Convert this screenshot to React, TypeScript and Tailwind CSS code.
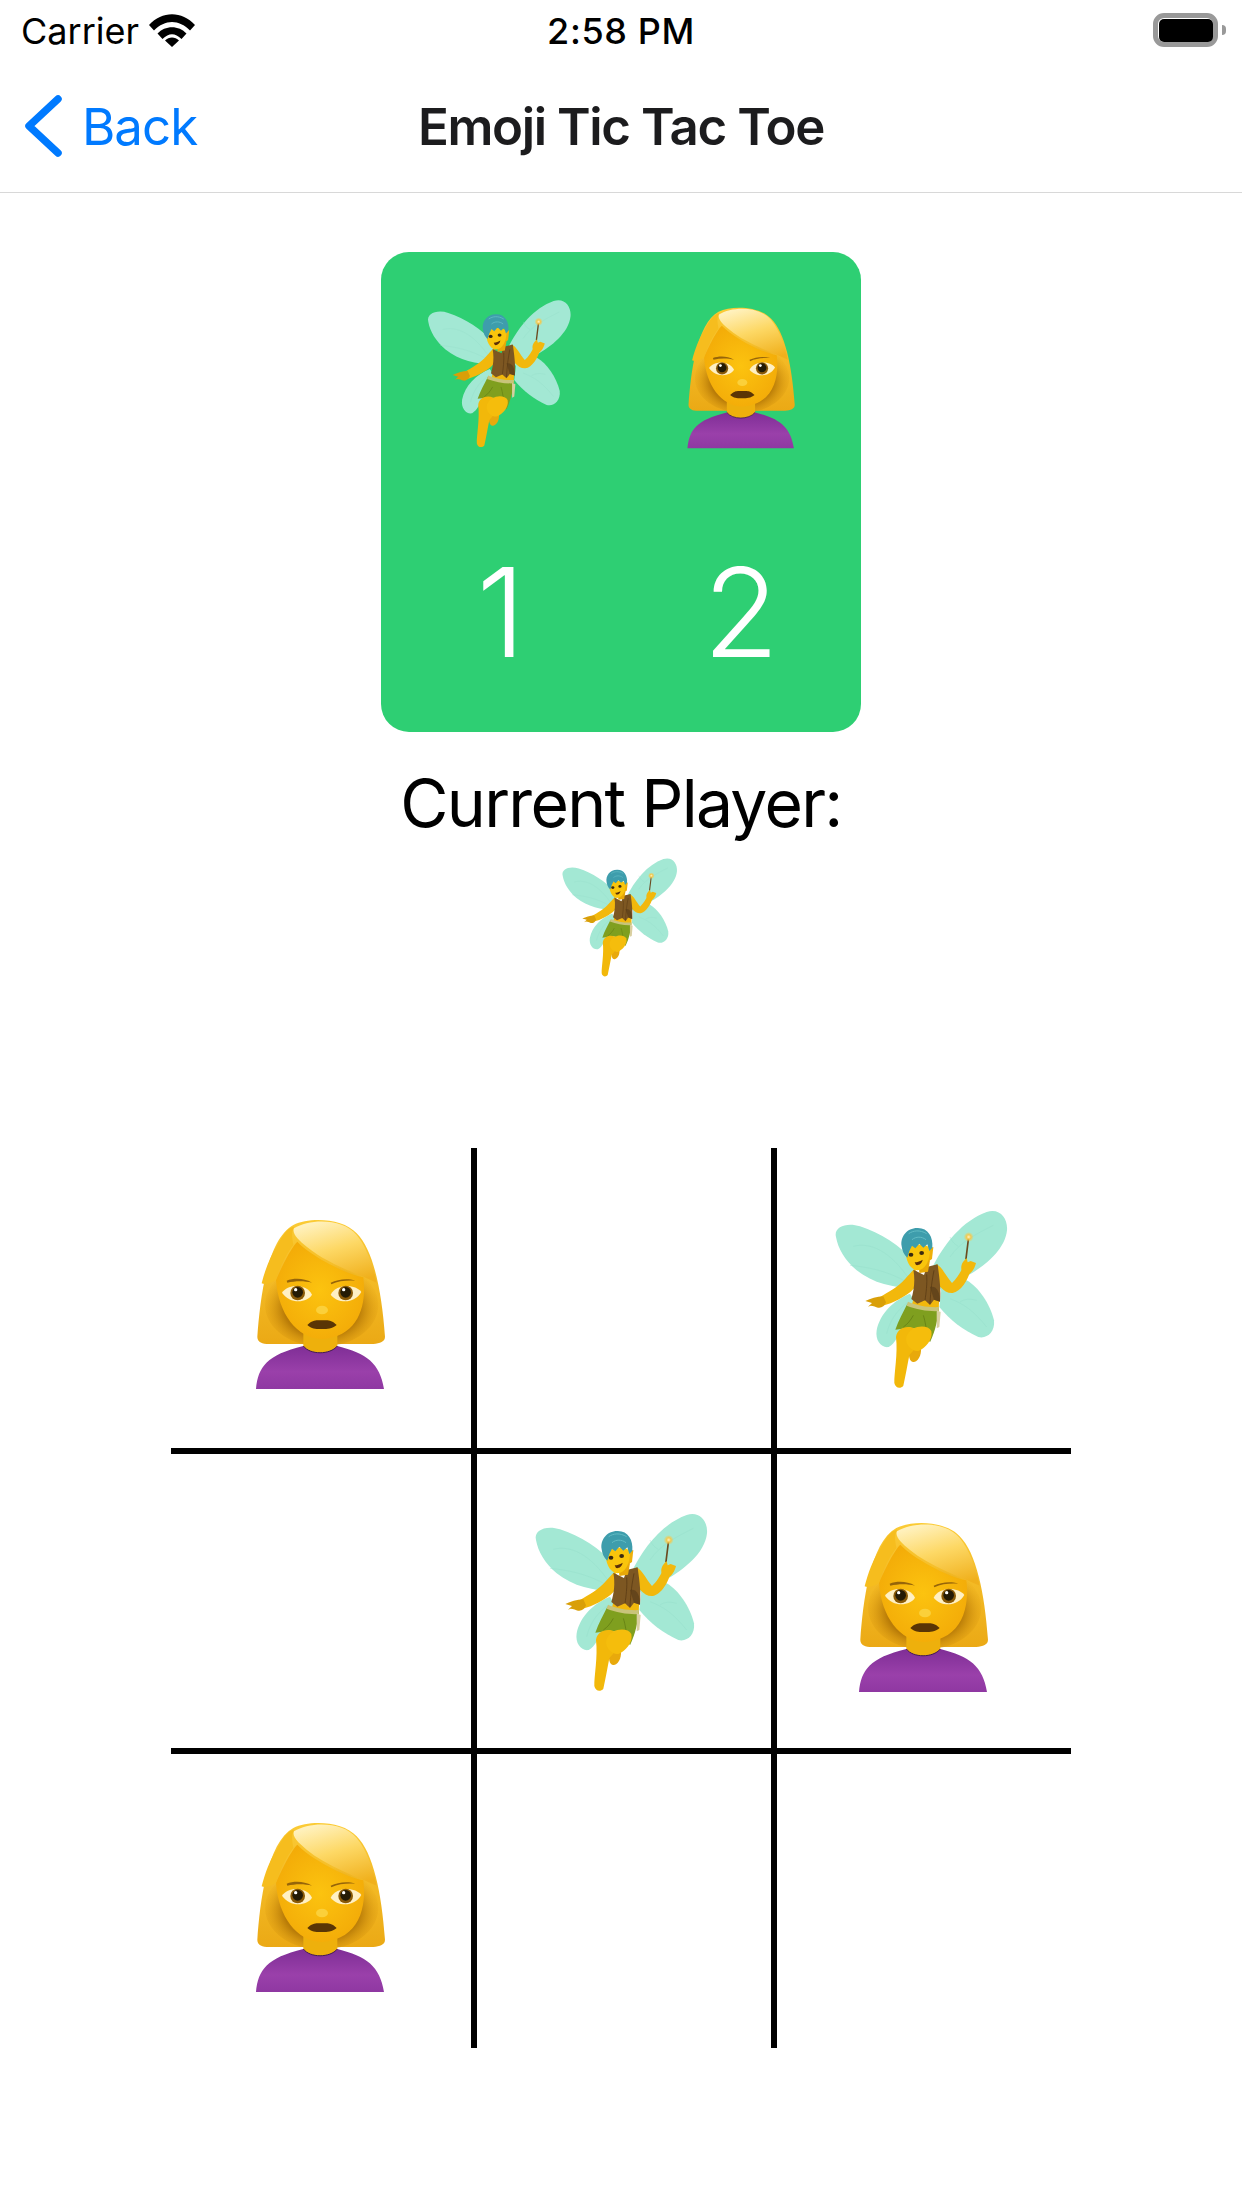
// App.tsx
type Mark = 'fairy' | 'woman' | null

const BOARD: Mark[] = ['woman', null, 'fairy', null, 'fairy', 'woman', 'woman', null, null]

const Defs = () => (
  <defs>
    <linearGradient id="hairGrad" x1="0" y1="0" x2="0" y2="1">
      <stop offset="0" stopColor="#fbcb35" />
      <stop offset="1" stopColor="#eba915" />
    </linearGradient>
    <linearGradient id="hairTop" x1="0.3" y1="0" x2="0.7" y2="1">
      <stop offset="0" stopColor="#fff1bd" />
      <stop offset="0.45" stopColor="#fdd865" />
      <stop offset="1" stopColor="#f0b01c" />
    </linearGradient>
    <radialGradient id="hairShade" cx="0.5" cy="0.55" r="0.55">
      <stop offset="0.6" stopColor="#b97c08" />
      <stop offset="1" stopColor="#e9a714" stopOpacity="0" />
    </radialGradient>
    <radialGradient id="faceGrad" cx="0.5" cy="0.5" r="0.62">
      <stop offset="0" stopColor="#fcc30f" />
      <stop offset="1" stopColor="#f2a807" />
    </radialGradient>
    <linearGradient id="shirtGrad" x1="0" y1="0" x2="0" y2="1">
      <stop offset="0" stopColor="#7f2e96" />
      <stop offset="0.6" stopColor="#9a40aa" />
      <stop offset="1" stopColor="#8f38a2" />
    </linearGradient>
    <radialGradient id="glow">
      <stop offset="0" stopColor="#fff7c8" />
      <stop offset="0.45" stopColor="#fbc744" stopOpacity="0.9" />
      <stop offset="1" stopColor="#fbc744" stopOpacity="0" />
    </radialGradient>
  </defs>
)

const FairyIcon = ({ className }: { className: string }) => (
  <svg viewBox="12 3 660 660" className={className}>
    <Defs />
    {/* wings */}
    <g fill="#a3e8d4">
      <path d="M78 150C70 120 110 105 150 118C210 138 272 175 312 225L316 305C250 302 190 290 140 250C105 220 84 185 78 150Z" />
      <path d="M362 252C400 170 460 100 530 75C570 62 594 95 591 130C585 190 520 240 470 268L395 312Z" />
      <path d="M300 320C250 340 210 380 200 430C195 462 215 484 236 480C256 470 266 440 282 420L312 340Z" />
      <path d="M395 300L470 280C505 300 540 350 552 400C556 435 530 457 505 450C460 430 420 400 388 360Z" />
    </g>
    <g fill="none" stroke="#93dcc8" strokeWidth="2" opacity="0.55">
      <path d="M130 178C180 165 240 190 300 280" />
      <path d="M120 235C170 240 230 250 290 285" />
      <path d="M420 210C450 165 500 140 550 115M445 178C430 170 425 160 420 150" />
      <path d="M420 335C460 350 490 370 530 420M450 345C465 335 480 335 500 340" />
      <path d="M230 440C240 400 260 370 295 345" />
    </g>
    {/* back foot */}
    <path d="M298 480L332 476C336 495 330 520 312 525C298 527 294 505 298 480Z" fill="#e8a90c" />
    {/* right arm + hand + wand */}
    <path d="M476 150L468 215" stroke="#6b4a20" strokeWidth="5" strokeLinecap="round" />
    <circle cx="476" cy="150" r="15" fill="url(#glow)" />
    <path d="M378 232C396 238 408 268 426 288C440 276 452 255 460 238L482 246C476 278 452 314 428 318C400 320 382 288 368 272Z" fill="#f2b80c" />
    <path d="M454 246C452 232 462 220 470 214L473 226L482 222L498 228C495 242 484 262 470 264C460 264 456 256 454 246Z" fill="#f2b80c" />
    {/* left arm + hand */}
    <path d="M314 246C300 256 280 288 250 306C235 316 222 323 210 330L218 356C250 348 282 330 302 314C320 300 326 280 326 262Z" fill="#f2b80c" />
    <path d="M166 342C182 335 200 328 220 328L228 346C224 358 214 364 204 362C198 360 190 356 182 356L174 359L186 348Z" fill="#d99f08" />
    {/* torso */}
    <path d="M314 320L388 322L386 372L302 368Z" fill="#f2b80c" />
    <path d="M310 248L342 264L350 240L383 232C386 260 394 300 390 344L372 338L360 354L345 340L322 350L304 336C312 310 316 280 310 248Z" fill="#7d5722" />
    <path d="M350 262C352 290 348 320 345 340M372 250C366 280 362 310 360 350" stroke="#5c3c14" strokeWidth="2.500" fill="none" />
    <path d="M360 300C380 295 390 315 390 344L372 338Z" fill="#5a3d18" opacity="0.7" />
    {/* shorts */}
    <path d="M292 350C320 360 360 366 386 364C384 395 377 430 360 466L338 428L300 422L256 428C266 398 280 375 292 350Z" fill="#7f9f1f" />
    <path d="M310 385C302 400 292 412 280 420M340 385C345 400 346 412 352 440" stroke="#647f14" strokeWidth="2.500" fill="none" />
    <path d="M294 344C320 356 360 362 387 360L386 372C360 374 320 368 290 356Z" fill="#c8c47a" />
    <path d="M380 370L392 375L388 420L380 424Z" fill="#d9cfa0" />
    {/* legs */}
    <path d="M258 450C262 415 310 410 328 438C334 470 310 490 298 505C292 535 286 570 280 596C272 606 256 604 253 588C252 560 264 500 258 450Z" fill="#f2b80a" />
    <path d="M290 448C302 415 352 410 364 432C370 458 345 484 325 492C305 494 282 472 290 448Z" fill="#f5bd0c" />
    {/* head */}
    <path d="M352 186L370 180L366 216L348 228Z" fill="#eeb008" />
    <path d="M326 228L360 220L354 254L328 258Z" fill="#e8a808" />
    <path d="M286 186C286 172 354 164 360 186C360 222 346 248 322 250C298 248 286 216 286 186Z" fill="#f9c50c" />
    <path d="M275 178C270 150 290 123 322 123C354 122 370 150 367 182L358 192L352 172L340 182L328 170L316 184L306 176L298 192L292 212C282 204 276 190 275 178Z" fill="#3e9dac" />
    <path d="M296 140C310 130 330 128 350 140M306 158C318 148 335 148 348 158" stroke="#62bcc4" strokeWidth="3" fill="none" />
    <ellipse cx="303" cy="203" rx="7" ry="6" fill="#3a2a10" />
    <ellipse cx="335" cy="198" rx="7" ry="6" fill="#3a2a10" />
    <path d="M314 226C322 226 332 222 338 218C336 230 326 236 318 234Z" fill="#5a2f08" />
  </svg>
)

const WomanIcon = ({ className }: { className: string }) => (
  <svg viewBox="3 -6 660 660" className={className}>
    <Defs />
    {/* hair */}
    <path d="M142 440C150 330 170 150 250 105C300 80 400 85 440 130C490 180 515 300 525 440C525 455 510 460 490 462L170 462C150 460 142 452 142 440Z" fill="url(#hairGrad)" />
    <ellipse cx="335" cy="345" rx="170" ry="125" fill="url(#hairShade)" />
    {/* neck + shirt */}
    <path d="M280 430H382V478C360 495 302 495 280 478Z" fill="#eeb00c" />
    <path d="M138 597C145 530 170 495 280 468C300 495 360 495 382 468C470 490 510 520 522 597Z" fill="url(#shirtGrad)" />
    <path d="M280 468C300 495 360 495 382 468" fill="none" stroke="#431a55" strokeWidth="3" />
    {/* face */}
    <path d="M198 270C215 230 245 170 262 155C300 195 400 250 460 262C470 340 450 440 335 447C260 445 205 370 198 270Z" fill="url(#faceGrad)" />
    {/* swoop of hair */}
    <path d="M252 115C300 85 400 85 440 135C470 170 490 230 500 278C440 250 350 220 290 170C265 150 245 130 252 115Z" fill="url(#hairTop)" />
    <path d="M200 170C215 140 232 112 252 110C242 130 248 150 250 165C230 190 205 240 198 270C180 280 165 285 155 280C165 240 180 200 200 170Z" fill="#f6bd1e" />
    {/* brows, worried rather than cross */}
    <path d="M230 272C252 264 282 264 306 278C284 272 256 272 232 278Z" fill="#96650a" />
    <path d="M362 278C384 268 412 264 436 272C414 270 386 272 364 283Z" fill="#96650a" />
    {/* eyes */}
    <path d="M216 308C232 282 288 278 306 314C292 338 240 344 216 308Z" fill="#fff0c4" />
    <path d="M362 314C380 280 436 282 454 306C432 344 382 340 362 314Z" fill="#fff0c4" />
    <circle cx="263" cy="309" r="22" fill="#8a5a08" />
    <circle cx="263" cy="307" r="16" fill="#241b06" />
    <circle cx="257" cy="299" r="5" fill="#fff" />
    <circle cx="407" cy="309" r="22" fill="#8a5a08" />
    <circle cx="407" cy="307" r="16" fill="#241b06" />
    <circle cx="401" cy="299" r="5" fill="#fff" />
    {/* nose + mouth */}
    <ellipse cx="336" cy="360" rx="18" ry="13" fill="#fbd03a" />
    <path d="M292 405C310 386 325 391 335 391C348 391 362 386 380 405C365 418 345 417 334 417C322 417 306 418 292 405Z" fill="#5a3505" />
  </svg>
)

const Emoji = ({ mark, className }: { mark: Mark; className: string }) => {
  if (mark === 'fairy') return <FairyIcon className={className} />
  if (mark === 'woman') return <WomanIcon className={className} />
  return null
}

const StatusBar = () => (
  <div className="grid h-[60px] grid-cols-[1fr_auto_1fr] items-center px-4 text-[36px] leading-none text-black">
    <div className="flex items-center gap-[10px] pl-[5px]">
      <span className="pt-[2px]">Carrier</span>
      <svg viewBox="0 0 46 33" className="h-[33px] w-[46px]">
        <path d="M0 11C13-3.500 33-3.500 46 11L41 16.500C30 5 16 5 5 16.500Z" fill="#000" />
        <path d="M8.500 19.500C16 11 30 11 37.500 19.500L32.500 25C26 18.500 20 18.500 13.500 25Z" fill="#000" />
        <path d="M16 26.500C20 22.500 26 22.500 30 26.500L23 33Z" fill="#000" />
      </svg>
    </div>
    <span className="pt-[2px] font-medium tracking-[0.6px]">2:58 PM</span>
    <div className="flex items-center justify-end">
      <div className="flex h-[34px] w-[65px] items-center justify-center rounded-[11px] border-[5px] border-[#999999]">
        <div className="h-[23px] w-[54px] rounded-[5px] bg-black" />
      </div>
      <div className="ml-1 h-[10px] w-1 rounded-r-full bg-[#999999]" />
    </div>
  </div>
)

const NavBar = () => (
  <div className="grid h-[133px] grid-cols-[1fr_auto_1fr] items-center border-b border-[#d8d8d8] px-6 text-[51px] leading-none">
    <div className="flex items-center gap-[20px] tracking-[-1px] text-[#007aff]">
      <svg viewBox="0 0 38 62" className="h-[62px] w-[38px]">
        <path d="M34 4L5 31L34 58" fill="none" stroke="#007aff" strokeWidth="7.500" strokeLinecap="round" strokeLinejoin="round" />
      </svg>
      <span>Back</span>
    </div>
    <span className="font-semibold tracking-[-1.4px] text-[#1c1c1e]">Emoji Tic Tac Toe</span>
  </div>
)

const ScoreCard = () => (
  <div className="grid h-[480px] w-[480px] grid-cols-2 grid-rows-2 place-items-center rounded-[28px] bg-[#2ecf73] text-[124px] font-light leading-none text-white">
    <FairyIcon className="h-[183px] w-[183px]" />
    <WomanIcon className="h-[183px] w-[183px]" />
    <span>1</span>
    <span>2</span>
  </div>
)

const Board = () => (
  <div className="grid w-[900px] grid-cols-[306px_300px_294px] grid-rows-[306px_300px_294px]">
    {BOARD.map((mark, i) => (
      <div
        key={i}
        className={`flex items-center justify-center border-black ${i % 3 < 2 ? 'border-r-[6px]' : ''} ${i < 6 ? 'border-b-[6px]' : ''}`}
      >
        <Emoji mark={mark} className="h-[220px] w-[220px]" />
      </div>
    ))}
  </div>
)

export default function App() {
  return (
    <div className="h-[2208px] w-[1242px] overflow-hidden bg-white font-['Inter',sans-serif]">
      <StatusBar />
      <NavBar />
      <div className="flex flex-col items-center pt-[59px]">
        <ScoreCard />
        <div className="mt-[32px] text-[66px] leading-[79px] tracking-[-1.7px] text-black">Current Player:</div>
        <FairyIcon className="h-[147px] w-[147px]" />
        <div className="mt-[158px]">
          <Board />
        </div>
      </div>
    </div>
  )
}
